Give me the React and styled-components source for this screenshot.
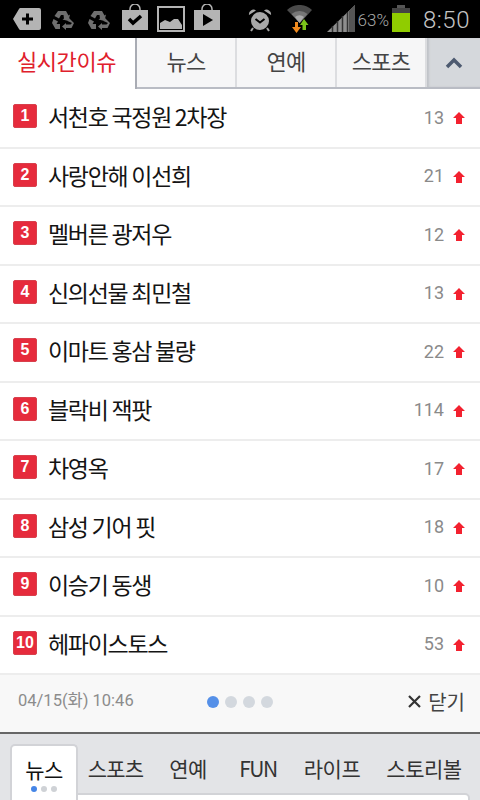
import React from "react";
import styled, { createGlobalStyle } from "styled-components";

const GlobalStyle = createGlobalStyle`
  html, body {
    margin: 0;
    padding: 0;
    background: #fff;
  }
  body {
    font-family: Roboto, "Noto Sans CJK KR", sans-serif;
  }
  * {
    box-sizing: border-box;
  }
`;

const Page = styled.div`
  width: 480px;
  height: 800px;
  overflow: hidden;
  display: flex;
  flex-direction: column;
`;

const StatusBar = styled.div`
  height: 38px;
  background: #000;
  display: flex;
  align-items: flex-start;
  padding-left: 13px;
  flex-shrink: 0;
`;

const StatusIcon = styled.svg`
  display: block;
  flex-shrink: 0;
  margin-left: ${(props) => props.$left || 0}px;
  margin-top: ${(props) => props.$top || 0}px;
`;

const StatusRight = styled.div`
  margin-left: auto;
  display: flex;
  align-items: flex-start;
  padding-right: 10px;
`;

const Percent = styled.span`
  font-size: 17px;
  line-height: 20px;
  margin-top: 10px;
  color: #a8a8a8;
  margin-left: 3px;
  font-weight: 300;
`;

const Clock = styled.span`
  font-size: 24px;
  line-height: 28px;
  margin-top: 6px;
  font-weight: 300;
  color: #c4c4c4;
  margin-left: 13px;
  letter-spacing: 0.5px;
`;

const TabBar = styled.div`
  height: 51px;
  display: flex;
  flex-shrink: 0;
  border-bottom: 2px solid #b9bcc4;
`;

const ActiveTab = styled.div`
  width: 137px;
  margin-bottom: -2px;
  background: #fff;
  border-right: 2px solid #a9acb4;
  color: #e0202c;
  font: 400 22px "Noto Sans CJK KR", sans-serif;
  letter-spacing: -0.4px;
  display: flex;
  align-items: center;
  justify-content: center;
  padding: 0 2px 7px 0;
`;

const Tab = styled.div`
  width: ${(props) => props.$w}px;
  background: #f6f6f7;
  border-right: 2px solid #dcdde0;
  color: #444;
  font: 400 22px "Noto Sans CJK KR", sans-serif;
  letter-spacing: -0.7px;
  display: flex;
  align-items: center;
  justify-content: center;
  padding-bottom: 6px;
`;

const Collapse = styled.div`
  flex: 1;
  background: #d5d8dc;
  display: flex;
  align-items: center;
  justify-content: center;
  box-shadow: inset 2px 0 2px #c0c3c8;
`;

const List = styled.div`
  display: flex;
  flex-direction: column;
  flex-shrink: 0;
  padding-top: 1px;
`;

const Row = styled.div`
  height: 58.5px;
  display: flex;
  align-items: center;
  padding: 0 15px 4px 13px;
  border-bottom: 2px solid #ededed;
`;

const Rank = styled.span`
  width: 24px;
  height: 24px;
  background: #e62b3c;
  border: 1px solid #d8404c;
  border-radius: 2px;
  color: #fff;
  font: 700 16px "Liberation Sans", sans-serif;
  display: flex;
  align-items: center;
  justify-content: center;
  flex-shrink: 0;
`;

const Title = styled.span`
  margin-left: 11px;
  font: 400 23px "Noto Sans CJK KR", sans-serif;
  letter-spacing: -1.3px;
  color: #141414;
`;

const Count = styled.span`
  margin-left: auto;
  margin-top: 2px;
  font: 400 18px Roboto, sans-serif;
  color: #8a8a8a;
`;

const Arrow = styled.svg`
  width: 12px;
  height: 12px;
  margin-left: 9px;
  margin-top: 4px;
  fill: #f3212f;
`;

const Footer = styled.div`
  height: 59px;
  flex-shrink: 0;
  background: #f8f8f8;
  display: flex;
  align-items: center;
  padding: 0 15px 4px 18px;
  border-bottom: 2px solid #666;
`;

const Stamp = styled.span`
  font: 400 16.5px Roboto, "Noto Sans CJK KR", sans-serif;
  color: #8c8c8c;
  margin-bottom: 5px;
`;

const Dots = styled.div`
  display: flex;
  gap: 6px;
  margin-left: 73px;
`;

const Dot = styled.span`
  width: 12px;
  height: 12px;
  border-radius: 50%;
  background: ${(props) => (props.$on ? "#5590e8" : "#d3d8de")};
`;

const Close = styled.div`
  margin-left: auto;
  display: flex;
  align-items: center;
  gap: 7px;
  font: 400 20px "Noto Sans CJK KR", sans-serif;
  color: #444;
`;

const BottomNav = styled.div`
  flex: 1;
  background: #e3e4e7;
  position: relative;
  display: flex;
  padding: 10px 3px 0 10px;
  align-items: flex-start;
`;

const Panel = styled.div`
  position: absolute;
  left: 10px;
  right: 10px;
  top: 59px;
  height: 20px;
  background: #fff;
  border: 2px solid #d2d3d7;
  border-radius: 5px 5px 0 0;
`;

const NavActive = styled.div`
  position: relative;
  z-index: 1;
  width: 68px;
  height: 62px;
  background: #fff;
  border: 2px solid #d2d3d7;
  border-bottom: none;
  border-radius: 5px 5px 0 0;
  font: 400 21px "Noto Sans CJK KR", sans-serif;
  letter-spacing: -0.5px;
  color: #111;
  display: flex;
  flex-direction: column;
  align-items: center;
  padding-top: 9px;
  line-height: 28px;
`;

const MiniDots = styled.div`
  display: flex;
  gap: 4px;
  margin-top: 3px;
`;

const MiniDot = styled.span`
  width: 6px;
  height: 6px;
  border-radius: 50%;
  background: ${(props) => (props.$on ? "#4585e6" : "#cfd2d6")};
`;

const NavItem = styled.div`
  width: ${(props) => props.$w}px;
  text-align: center;
  font: 400 21px "Noto Sans CJK KR", sans-serif;
  letter-spacing: ${(props) => props.$spacing || -0.5}px;
  color: #333;
  padding-top: 10px;
  line-height: 28px;
`;

const rows = [
  ["서천호 국정원 2차장", 13],
  ["사랑안해 이선희", 21],
  ["멜버른 광저우", 12],
  ["신의선물 최민철", 13],
  ["이마트 홍삼 불량", 22],
  ["블락비 잭팟", 114],
  ["차영옥", 17],
  ["삼성 기어 핏", 18],
  ["이승기 동생", 10],
  ["헤파이스토스", 53],
];

function Recycle({ left }) {
  return (
    <StatusIcon $left={left} $top={10} width="22" height="20" viewBox="0 0 22 20" fill="#6f6f6f">
      <path d="M6 1h8l2.500 4.500 1.500-1-1.500 6.500-6-1.500 1.500-1L11.500 5H9L7 8.500 2.500 6z" />
      <path d="M1.500 9l4.500 2.500L4.500 14H8v5H3.500L0 13z" />
      <path d="M17 8l5 5-2.500 5H14v2l-4-3.500 4-3.500v1.500h4.500L20 13l-4.500-2z" />
    </StatusIcon>
  );
}

function LeftIcons() {
  return (
    <>
      <StatusIcon $top={8} width="28" height="22" viewBox="0 0 28 22">
        <path d="M0 11L6 1a2 2 0 0 1 1-1h19a2 2 0 0 1 2 2v18a2 2 0 0 1-2 2H7a2 2 0 0 1-1-1z" fill="#b4b4b4" />
        <path d="M9 11h11M14.500 5.500v11" stroke="#000" strokeWidth="3" />
      </StatusIcon>
      <Recycle left={11} />
      <Recycle left={14} />
      <StatusIcon $left={12} $top={4} width="26" height="26" viewBox="0 0 26 26">
        <path d="M8 7V5a5 5 0 0 1 10 0v2" fill="none" stroke="#b4b4b4" strokeWidth="1.500" />
        <rect y="6" width="26" height="20" fill="#b4b4b4" />
        <path d="M7 15l4 4 8-7" fill="none" stroke="#000" strokeWidth="3.500" />
      </StatusIcon>
      <StatusIcon $left={9} $top={6} width="28" height="26" viewBox="0 0 28 26">
        <rect x="1" y="1" width="26" height="24" fill="none" stroke="#b4b4b4" strokeWidth="2" />
        <path d="M3 23v-6l5-3 5 2 4-3 4 0 4 6v4z" fill="#b4b4b4" />
      </StatusIcon>
      <StatusIcon $left={9} $top={4} width="26" height="26" viewBox="0 0 26 26">
        <path d="M8 7V5a5 5 0 0 1 10 0v2" fill="none" stroke="#b4b4b4" strokeWidth="1.500" />
        <rect y="6" width="26" height="20" fill="#b4b4b4" />
        <path d="M9 10l10 6-10 6z" fill="#000" />
      </StatusIcon>
    </>
  );
}

function RightIcons() {
  return (
    <StatusRight>
      <StatusIcon $top={8} width="24" height="24" viewBox="0 0 24 24">
        <path d="M1 7a4.500 4.500 0 0 1 7-4.500zM23 7a4.500 4.500 0 0 0-7-4.500z" fill="#a8a8a8" />
        <circle cx="12" cy="13" r="9" fill="#a8a8a8" />
        <path d="M5 20l-2 3M19 20l2 3" stroke="#a8a8a8" strokeWidth="2" />
        <path d="M7.500 11l4.500 3.500 4.500-3.500" fill="none" stroke="#000" strokeWidth="2" />
      </StatusIcon>
      <StatusIcon $left={15} $top={5} width="26" height="28" viewBox="0 0 26 28">
        <path d="M0 5a18 18 0 0 1 25 0l-12 13z" fill="#4a4a4a" />
        <path d="M4.500 9a12 12 0 0 1 16 0l-8 9z" fill="#777" />
        <path d="M8 12a7 7 0 0 1 9 0l-4.500 6z" fill="#aaa" />
        <path d="M8 17h3v5h3l-4.500 6L5 22h3z" fill="#f08a1e" />
        <path d="M17 14l4.500 6H19v5h-3.500v-5H13z" fill="#7cc41a" />
      </StatusIcon>
      <StatusIcon $left={14} $top={5} width="28" height="27" viewBox="0 0 28 27">
        <path d="M0 27L28 0v27z" fill="#8e8e8e" />
        <path d="M22 27V6l6-6v27z" fill="#555" />
        <path d="M5.500 27v-6M10.500 27V16M15.500 27V11M20.500 27V7" stroke="#333" strokeWidth="1.500" />
      </StatusIcon>
      <Percent>63%</Percent>
      <StatusIcon $left={3} $top={5} width="18" height="27" viewBox="0 0 18 27">
        <rect x="5" y="0" width="8" height="3" fill="#555" />
        <rect x="0" y="3" width="18" height="5" fill="#444" />
        <rect x="0" y="8" width="18" height="19" fill="#90cc00" />
      </StatusIcon>
      <Clock>8:50</Clock>
    </StatusRight>
  );
}

export default function App() {
  return (
    <Page>
      <GlobalStyle />
      <StatusBar>
        <LeftIcons />
        <RightIcons />
      </StatusBar>
      <TabBar>
        <ActiveTab>실시간이슈</ActiveTab>
        <Tab $w={100}>뉴스</Tab>
        <Tab $w={100}>연예</Tab>
        <Tab $w={90}>스포츠</Tab>
        <Collapse>
          <svg width="18" height="12" viewBox="0 0 18 12">
            <path d="M2 10l7-7 7 7" fill="none" stroke="#4d5a70" strokeWidth="3.500" />
          </svg>
        </Collapse>
      </TabBar>
      <List>
        {rows.map(([title, count], idx) => (
          <Row key={idx}>
            <Rank>{idx + 1}</Rank>
            <Title>{title}</Title>
            <Count>{count}</Count>
            <Arrow viewBox="0 0 12 12">
              <path d="M6 0l6 6H9v6H3V6H0z" />
            </Arrow>
          </Row>
        ))}
      </List>
      <Footer>
        <Stamp>04/15(화) 10:46</Stamp>
        <Dots>
          <Dot $on />
          <Dot />
          <Dot />
          <Dot />
        </Dots>
        <Close>
          <svg width="13" height="13" viewBox="0 0 13 13">
            <path d="M1 1l11 11M12 1L1 12" stroke="#333" strokeWidth="2.200" />
          </svg>
          닫기
        </Close>
      </Footer>
      <BottomNav>
        <Panel />
        <NavActive>
          뉴스
          <MiniDots>
            <MiniDot $on />
            <MiniDot />
            <MiniDot />
          </MiniDots>
        </NavActive>
        <NavItem $w={75} $spacing={-0.9}>스포츠</NavItem>
        <NavItem $w={70}>연예</NavItem>
        <NavItem $w={70} $spacing={-1.5}>FUN</NavItem>
        <NavItem $w={78}>라이프</NavItem>
        <NavItem $w={106}>스토리볼</NavItem>
      </BottomNav>
    </Page>
  );
}
